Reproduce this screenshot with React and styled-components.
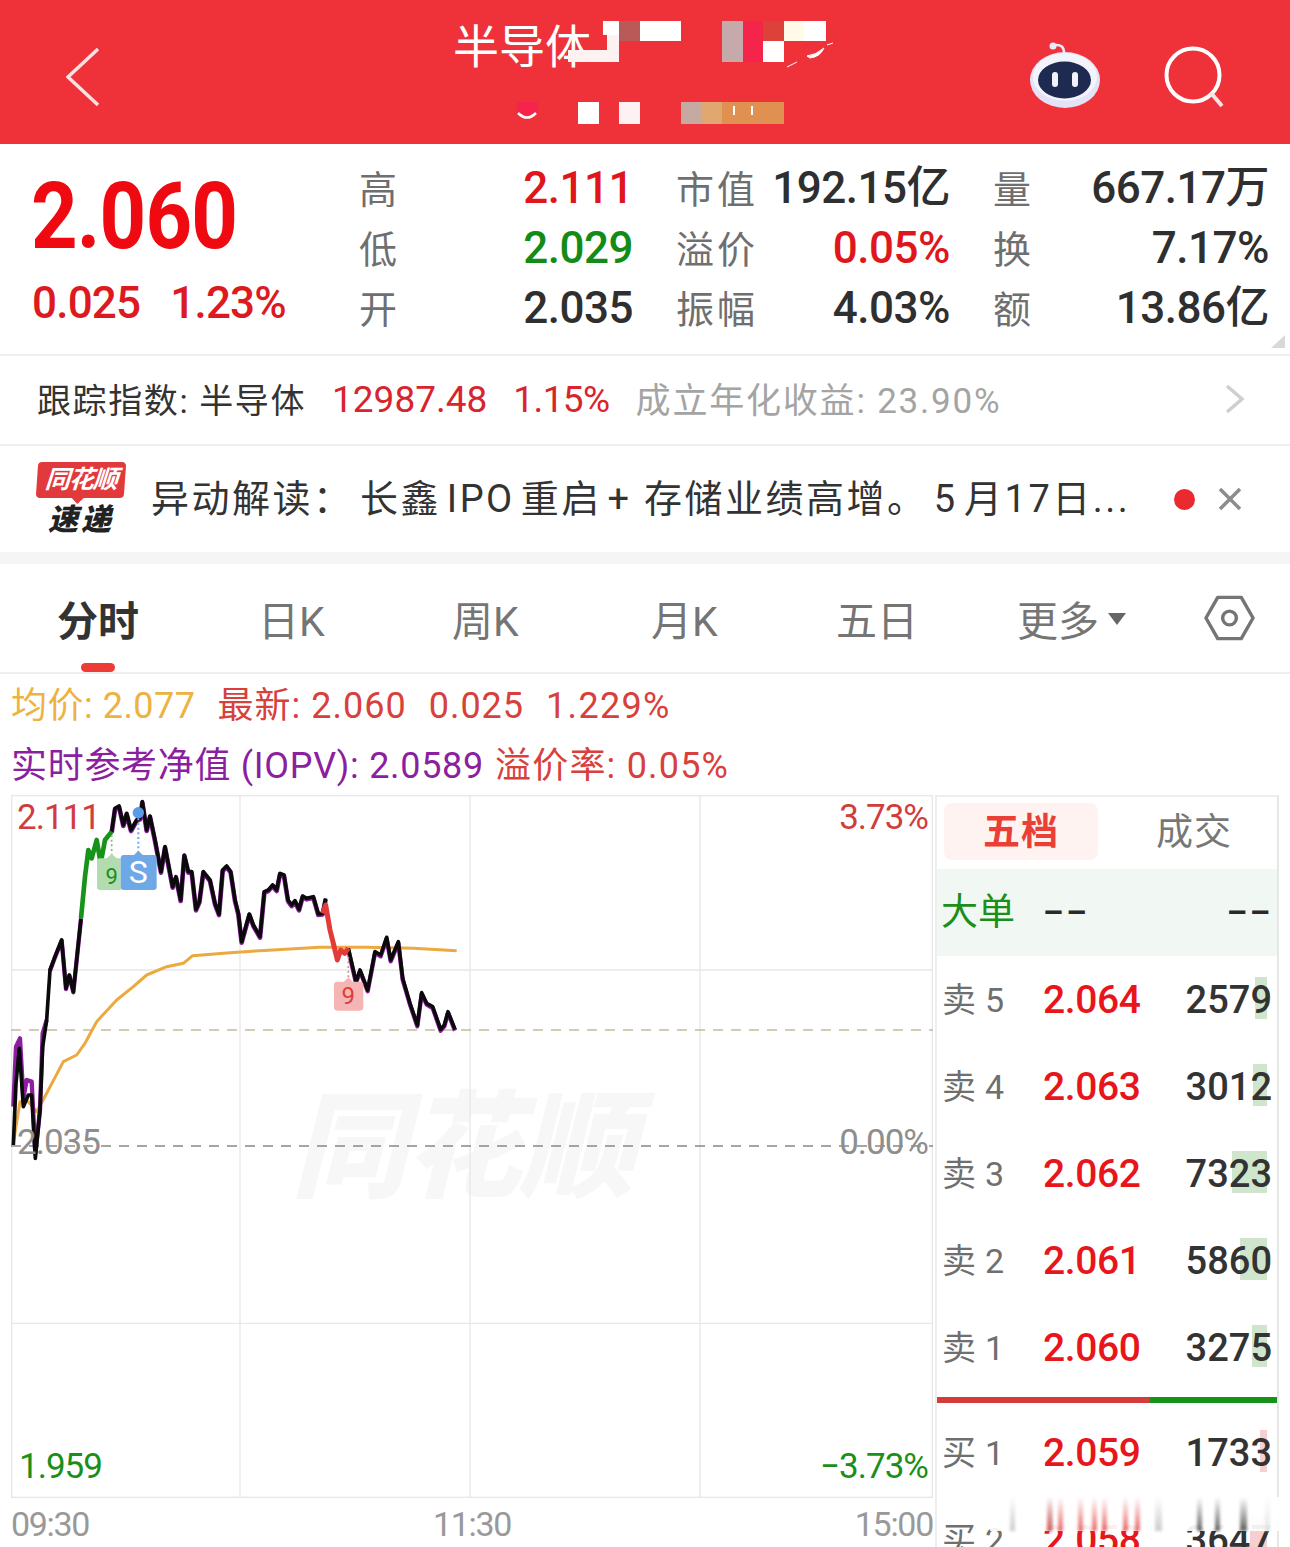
import React from "react";
import styled, { createGlobalStyle } from "styled-components";

const Global = createGlobalStyle`
  html, body { margin: 0; padding: 0; background: #fff; }
  * { box-sizing: border-box; }
`;
const FONT = `Roboto, "Noto Sans CJK SC", sans-serif`;

const Page = styled.div`
  position: relative; width: 1290px; height: 1547px; overflow: hidden;
  background: #fff; font-family: ${FONT}; color: #333;
`;
const Header = styled.header`
  position: relative; height: 144px; background: #ef323a;
  display: flex; justify-content: space-between; align-items: center; padding: 0 64px 0 66px;
`;
const HeaderIcons = styled.div`display: flex; align-items: center; gap: 62px; margin-top: 10px;`;
const BackIcon = styled.svg`width: 34px; height: 60px; margin-top: 10px;`;
const Title = styled.h1`
  position: absolute; left: 453px; top: 16px; margin: 0; color: #fff;
  font: 400 46px/62px ${FONT};
`;
const Mosaic = styled.i`
  position: absolute; display: block;
  left: ${p => p.$x}px; top: ${p => p.$y}px; width: ${p => p.$w}px; height: ${p => p.$h}px;
  background: ${p => p.$c};
`;
const Scribble = styled.svg`position: absolute; left: 510px; top: 40px; width: 340px; height: 90px;`;

const Quote = styled.section`
  position: relative; height: 212px; display: flex; border-bottom: 2px solid #eee;
`;
const PriceBlock = styled.div`width: 360px; padding: 27px 0 0 33px;`;
const BigPrice = styled.div`
  font: 700 92px/92px ${FONT}; letter-spacing: -1px; color: #ee0a10; margin-left: -2px;
  transform: scaleX(0.885); transform-origin: left center;
`;
const PriceChange = styled.div`
  display: flex; gap: 30px; margin-top: 15px; margin-left: -1px;
  font: 500 44px/50px ${FONT}; letter-spacing: -0.8px; color: #dc1a20;
`;
const Stats = styled.div`
  display: grid; grid-template-columns: 272px 272px 274px; column-gap: 45px;
  grid-auto-rows: 60px; padding-top: 16px; align-content: start;
`;
const Stat = styled.div`display: flex; justify-content: space-between; align-items: center;`;
const StatLabel = styled.span`font: 400 38px/60px ${FONT}; color: #6f6f6f; letter-spacing: ${p => p.$wide ? "3px" : "0"}; margin-left: -1px;`;
const StatValue = styled.span`
  font: 500 44px/60px ${FONT}; letter-spacing: -0.5px; margin-top: -4px; margin-right: -1px;
  color: ${p => p.$c || "#2f2f2f"};
`;
const Corner = styled.i`
  position: absolute; right: 5px; bottom: 6px; width: 0; height: 0;
  border-style: solid; border-width: 0 0 13px 14px; border-color: transparent transparent #d8d8d8 transparent;
`;
const IndexRow = styled.section`
  height: 90px; display: flex; align-items: center; padding: 0 44px 2px 37px;
  border-bottom: 2px solid #eee; font-size: 34px; white-space: nowrap;
`;
const IndexLabel = styled.span`color: #333; letter-spacing: 1.6px; width: 295px; flex: none; margin-top: -2px;`;
const IndexValue = styled.span`color: #d8242c; font-size: 37px; letter-spacing: ${p => p.$s || 0}px; margin-right: ${p => p.$m}px;`;
const IndexGray = styled.span`color: #a4a4a4; letter-spacing: 1.8px; flex: 1; font-size: 35px; margin-top: -4px;`;

const NewsRow = styled.section`
  height: 106px; display: flex; align-items: center; padding: 0 47px 0 37px;
`;
const Logo = styled.div`width: 88px; flex: none; margin-right: 26px; display: flex; flex-direction: column; align-items: center; margin-top: 2px;`;
const Badge = styled.div`
  position: relative; width: 88px; height: 36px; background: #e23a3c; border-radius: 4px; transform: skewX(-4deg);
  color: #fff; font: italic 700 25px/36px ${FONT}; text-align: center; letter-spacing: -1px;
  &::after { content: ""; position: absolute; left: 36px; bottom: -6px; border-style: solid; border-width: 6px 6px 0 6px; border-color: #e23a3c transparent transparent transparent; }
`;
const LogoSub = styled.div`font: italic 900 30px/36px ${FONT}; color: #222; letter-spacing: 3px; margin-top: 4px;`;
const NewsText = styled.div`
  flex: 1; min-width: 0; font: 400 38px/50px ${FONT}; color: #333; white-space: nowrap;
  letter-spacing: 2.5px; word-spacing: -6px; margin-right: 40px;
`;
const Dot = styled.i`width: 21px; height: 21px; border-radius: 50%; background: #ea2a2e; flex: none; margin-right: 22px;`;
const CloseIcon = styled.svg`flex: none; width: 26px; height: 26px;`;
const Band = styled.div`height: 12px; background: #f5f5f5;`;

const Tabs = styled.nav`
  position: relative; height: 110px; border-bottom: 2px solid #eee; display: flex; align-items: center; padding: 8px 35px 0 57px;
`;
const Tab = styled.span`
  font: ${p => p.$on ? 700 : 400} 41px/50px ${FONT}; color: ${p => p.$on ? "#333" : "#757575"};
  width: ${p => p.$w}px; flex: none; display: flex; align-items: center; white-space: nowrap;
`;
const TabMark = styled.i`position: absolute; left: 81px; bottom: 0; width: 34px; height: 9px; border-radius: 5px; background: #ee3b36;`;

const InfoBlock = styled.div`padding-top: 2px;`;
const InfoLine = styled.div`
  height: 60px; padding-left: 11px; display: flex; align-items: center; gap: ${p => p.$gap || 22}px;
  font: 400 36px/60px ${FONT}; white-space: nowrap;
`;
const InfoText = styled.span`color: ${p => p.$c}; letter-spacing: ${p => p.$s ?? 1}px;`;

const Lower = styled.section`display: flex; padding-left: 11px; margin-top: -1px;`;
const ChartCol = styled.div`width: 922px; flex: none;`;
const Chart = styled.div`position: relative; height: 703px; overflow: hidden;`;
const ChartSvg = styled.svg`position: absolute; inset: 0; width: 100%; height: 100%;`;
const Watermark = styled.div`
  position: absolute; left: 280px; top: 288px; font: italic 900 116px/130px ${FONT}; color: #f7f7f7; letter-spacing: -2px; white-space: nowrap;
`;
const ChartLabel = styled.span`
  position: absolute; top: ${p => p.$t}px; ${p => p.$r != null ? `right: ${p.$r}px;` : `left: ${p.$l}px;`}
  font: 400 35px/40px ${FONT}; letter-spacing: -1px; color: ${p => p.$c};
`;
const Axis = styled.div`
  display: flex; justify-content: space-between; padding-top: 5px;
  font: 400 34px/42px ${FONT}; letter-spacing: -1.3px; color: #999;
`;

const Book = styled.aside`
  width: 344px; margin-left: 2px; flex: none; height: 760px; padding-top: 6px;
  border-left: 2px solid #eee; border-right: 2px solid #e6e6e6; border-top: 2px solid #eee;
`;
const BookTabs = styled.div`display: flex; height: 66px; padding: 0 0 0 7px;`;
const BookTab = styled.div`
  flex: none; width: ${p => p.$w}px; height: 57px; border-radius: 8px; padding-left: ${p => p.$pad || 0}px;
  background: ${p => p.$on ? "#fff3f2" : "transparent"};
  color: ${p => p.$on ? "#ea3f36" : "#777"}; font: ${p => p.$on ? 700 : 400} 37px/59px ${FONT}; letter-spacing: 1px; text-align: center;
`;
const BigRow = styled.div`
  height: 87px; background: #f1f8f3; padding: 0 4px 0 4px; display: grid; grid-template-columns: 102px 1fr auto;
  align-items: center; font: 400 37px/87px ${FONT}; color: #1a8f1a;
`;
const Dash = styled.span`color: #2a2a2a; font: 700 32px/87px ${FONT}; letter-spacing: 3px;`;
const Row = styled.div`
  position: relative; height: 87px; padding: 1px 5px 0 5px; display: grid; grid-template-columns: 101px 1fr auto; align-items: center;
`;
const RowLabel = styled.span`font: 400 34px/87px ${FONT}; color: #6f6f6f; letter-spacing: 0.3px; white-space: nowrap;`;
const RowPrice = styled.span`font: 500 39px/87px ${FONT}; color: #e8161a; letter-spacing: -0.4px; position: relative;`;
const RowQty = styled.span`font: 500 38px/87px ${FONT}; color: #333; position: relative; letter-spacing: 0;`;
const QtyBar = styled.i`
  position: absolute; right: 10px; top: 21px; height: 42px; width: ${p => p.$w}px;
  background: ${p => p.$buy ? "#f6cfd0" : "#cfe6cc"};
`;
const Split = styled.div`display: flex; height: 6px; margin: 6px 0 6px;`;
const SplitPart = styled.i`display: block; height: 100%; background: ${p => p.$c}; width: ${p => p.$w}px;`;
const Smear = styled.div`
  position: absolute; left: 990px; top: 1497px; width: 290px; height: 34px;
  background: linear-gradient(to bottom, rgba(255,255,255,.96), rgba(255,255,255,.92));
`;
const Streak = styled.i`
  position: absolute; top: 0; bottom: 0; left: ${p => p.$x}px; width: ${p => p.$w || 5}px;
  background: linear-gradient(to bottom, transparent, ${p => p.$c}); opacity: .75; filter: blur(1.5px);
`;

const black1 = "40,1065 48,880 58,775 70,950 85,915 95,915 106,1105 120,960 128,770 140,690 150,540 165,500 185,450 198,595 208,555 220,605 243,385";
const black2 = "335,125 345,55 357,48 370,105 380,70 393,120 410,90 420,85 427,35 440,120 450,78 465,150 483,245 495,170 518,290 528,260 542,330 553,195 565,245 575,245 588,358 598,335 610,245 630,270 645,340 657,372 668,240 680,228 692,245 705,330 715,370 725,455 748,372 760,405 780,440 793,305 805,300 818,285 830,300 840,250 852,255 864,330 875,345 885,332 897,358 908,318 920,325 940,320 955,372 968,370 977,325";
const black3 = "1045,475 1068,575 1080,540 1103,600 1125,485 1142,495 1160,442 1172,510 1195,455 1208,565 1230,640 1252,705 1265,608 1280,640 1298,650 1322,718 1333,705 1344,665 1365,718";
const green = "243,385 255,260 265,180 275,205 290,150 302,220 315,150 335,125";
const red = "968,370 977,345 990,420 1000,460 1012,510 1022,480 1034,490 1045,475";
const purple1 = "40,950 48,770 60,745 70,925 80,870 95,875 106,1090 120,960 128,730 140,690";
const purple = (s, dy) => s.split(" ").map(p => { const [a, b] = p.split(","); return `${a},${+b + dy}`; }).join(" ");
const avg = "40,1060 60,935 85,935 110,965 140,910 190,815 230,795 255,760 290,695 350,630 400,590 440,555 500,530 550,520 578,497 690,488 780,482 960,472 1100,472 1240,475 1370,482";

const mosaics = [
  [568, 50, 51, 12, "#fdf2f2"], [603, 21, 16, 14, "#fff"], [607, 35, 12, 16, "#fdf2f2"],
  [619, 21, 21, 20, "#b85a5a"], [640, 21, 41, 20, "#fff"],
  [722, 21, 21, 41, "#c6a9ab"], [743, 21, 20, 41, "#f5244a"], [763, 21, 21, 20, "#dd423a"],
  [763, 41, 21, 21, "#fff"], [784, 21, 20, 20, "#fffbe8"], [804, 21, 22, 20, "#fff"],
  [517, 102, 21, 13, "#f5244a"],
  [578, 102, 21, 22, "#fff"], [619, 102, 21, 22, "#fdf1f3"],
  [681, 102, 21, 22, "#c6a9a0"], [702, 102, 20, 22, "#e0a870"], [722, 102, 62, 22, "#e09050"],
  [733, 106, 2, 9, "#fff"], [751, 106, 2, 9, "#fff"],
];

const book = {
  sell: [["卖 5", "2.064", "2579", 12], ["卖 4", "2.063", "3012", 14], ["卖 3", "2.062", "7323", 35], ["卖 2", "2.061", "5860", 27], ["卖 1", "2.060", "3275", 15]],
  buy: [["买 1", "2.059", "1733", 7], ["买 2", "2.058", "3647", 17]],
};
const streaks = [[58, "#aaa"], [57, "#e23a3c"], [68, "#e23a3c"], [88, "#e23a3c"], [102, "#e23a3c"], [112, "#e23a3c"], [133, "#e23a3c"], [145, "#e23a3c"], [165, "#bbb", 7], [207, "#333"], [225, "#333"], [250, "#333", 7], [20, "#bbb"], [275, "#ddd"]];

const H = "\u200A";

export default function App() {
  return (
    <Page>
      <Global />
      <Header>
        <BackIcon viewBox="0 0 34 60"><path d="M32 2 L2 30 L32 58" fill="none" stroke="#fbe2e2" strokeWidth="3.5" /></BackIcon>
        <Title>半导体</Title>
        {mosaics.map((m, i) => <Mosaic key={i} $x={m[0]} $y={m[1]} $w={m[2]} $h={m[3]} $c={m[4]} />)}
        <Scribble viewBox="0 0 340 90">
          <path d="M8 73 Q17 82 26 73" fill="none" stroke="#fff" strokeWidth="2.5" />
          <path d="M297 16 Q306 15 314 8 Q310 17 300 18 Z M277 27 L287 22 M317 5 L323 3" fill="#fff" stroke="#fff" strokeWidth="1" />
        </Scribble>
        <HeaderIcons>
          <svg width="74" height="70" viewBox="0 0 74 70">
            <circle cx="25" cy="4" r="3.5" fill="#ecebf8" />
            <path d="M27 3 Q36 2 36 11" fill="none" stroke="#ecebf8" strokeWidth="2.5" />
            <ellipse cx="37" cy="38" rx="35" ry="28" fill="#e4e2f6" />
            <ellipse cx="37" cy="35" rx="32" ry="24" fill="#f3f3fb" />
            <ellipse cx="36.5" cy="38" rx="26.5" ry="18.5" fill="#1f2a50" />
            <rect x="24" y="30" width="6" height="15" rx="3" fill="#f2f3fa" />
            <rect x="44" y="30" width="6" height="15" rx="3" fill="#f2f3fa" />
          </svg>
          <svg width="62" height="62" viewBox="0 0 62 62">
            <circle cx="29" cy="29" r="26.5" fill="none" stroke="#fff" strokeWidth="4" />
            <path d="M47 47 L58 60" stroke="#fbe2e2" strokeWidth="4" />
          </svg>
        </HeaderIcons>
      </Header>

      <Quote>
        <PriceBlock>
          <BigPrice>2.060</BigPrice>
          <PriceChange><span>0.025</span><span>1.23%</span></PriceChange>
        </PriceBlock>
        <Stats>
          <Stat><StatLabel>高</StatLabel><StatValue $c="#e0161c">2.111</StatValue></Stat>
          <Stat><StatLabel $wide>市值</StatLabel><StatValue>192.15亿</StatValue></Stat>
          <Stat><StatLabel>量</StatLabel><StatValue>667.17万</StatValue></Stat>
          <Stat><StatLabel>低</StatLabel><StatValue $c="#128c14">2.029</StatValue></Stat>
          <Stat><StatLabel $wide>溢价</StatLabel><StatValue $c="#df161c">0.05%</StatValue></Stat>
          <Stat><StatLabel>换</StatLabel><StatValue>7.17%</StatValue></Stat>
          <Stat><StatLabel>开</StatLabel><StatValue>2.035</StatValue></Stat>
          <Stat><StatLabel $wide>振幅</StatLabel><StatValue>4.03%</StatValue></Stat>
          <Stat><StatLabel>额</StatLabel><StatValue>13.86亿</StatValue></Stat>
        </Stats>
        <Corner />
      </Quote>

      <IndexRow>
        <IndexLabel>跟踪指数: 半导体</IndexLabel>
        <IndexValue $m={26}>12987.48</IndexValue>
        <IndexValue $m={26} $s={-0.6}>1.15%</IndexValue>
        <IndexGray>成立年化收益: 23.90%</IndexGray>
        <svg width="22" height="30" viewBox="0 0 22 30"><path d="M3 2 L18 15 L3 28" fill="none" stroke="#cfcfcf" strokeWidth="3.5" /></svg>
      </IndexRow>

      <NewsRow>
        <Logo>
          <Badge>同花顺</Badge>
          <LogoSub>速递</LogoSub>
        </Logo>
        <NewsText>{`异动解读：${H}长鑫 IPO 重启 + ${H}存储业绩高增。${H}5${H}月17日...`}</NewsText>
        <Dot />
        <CloseIcon viewBox="0 0 26 26"><path d="M3 3 L23 23 M23 3 L3 23" stroke="#8c8c8c" strokeWidth="3.5" /></CloseIcon>
      </NewsRow>
      <Band />

      <Tabs>
        <Tab $on $w={201}>分时</Tab>
        <Tab $w={194}>日K</Tab>
        <Tab $w={199}>周K</Tab>
        <Tab $w={185}>月K</Tab>
        <Tab $w={181}>五日</Tab>
        <Tab $w={186}>
          更多
          <svg width="18" height="14" viewBox="0 0 18 14" style={{ marginLeft: 9, marginTop: -6 }}><path d="M0 1 H18 L9 13 Z" fill="#666" /></svg>
        </Tab>
        <svg width="52" height="46" viewBox="0 0 52 46" style={{ marginLeft: 1, marginTop: -8 }}>
          <path d="M2 23 L14 2 H38 L50 23 L38 44 H14 Z" fill="none" stroke="#757575" strokeWidth="3.5" strokeLinejoin="round" />
          <circle cx="26" cy="23" r="7" fill="none" stroke="#757575" strokeWidth="3.5" />
        </svg>
        <TabMark />
      </Tabs>

      <InfoBlock>
        <InfoLine>
          <InfoText $c="#edb23f" $s={0.5}>均价: 2.077</InfoText>
          <InfoText $c="#d8403c">最新: 2.060</InfoText>
          <InfoText $c="#d8403c">0.025</InfoText>
          <InfoText $c="#d8403c" $s={1.3}>1.229%</InfoText>
        </InfoLine>
        <InfoLine $gap={11}>
          <InfoText $c="#8b1fa0" $s={0.7}>实时参考净值 (IOPV): 2.0589</InfoText>
          <InfoText $c="#d8403c" $s={1.2}>溢价率: 0.05%</InfoText>
        </InfoLine>
      </InfoBlock>

      <Lower>
        <ChartCol>
          <Chart>
            <Watermark>同花顺</Watermark>
            <ChartSvg viewBox="33 15 2766 2109" preserveAspectRatio="none">
              <g stroke="#e8e8e8" strokeWidth="4" fill="none">
                <rect x="35" y="17" width="2762" height="2105" />
                <path d="M720 15 V2124 M1410 15 V2124 M2100 15 V2124 M33 540 H2799 M33 1600 H2799" />
              </g>
              <path d="M33 720 H2799" stroke="#c8b8a0" strokeWidth="4" strokeDasharray="30 24" />
              <path d="M33 1068 H2799" stroke="#888" strokeWidth="4" strokeDasharray="30 24" />
              <g fill="none" strokeLinejoin="round">
                <polyline points={avg} stroke="#eba93f" strokeWidth="9" />
                <polyline points={purple1} stroke="#8b1fa0" strokeWidth="13" />
                <polyline points={purple(black1.split(" ").slice(10).join(" "), 2)} stroke="#8b1fa0" strokeWidth="13" />
                <polyline points={purple(black2, 3)} stroke="#8b1fa0" strokeWidth="14" />
                <polyline points={purple(black3, 4)} stroke="#8b1fa0" strokeWidth="13" />
                <polyline points={black1} stroke="#0a0a0a" strokeWidth="11" />
                <polyline points={black2} stroke="#0a0a0a" strokeWidth="11" />
                <polyline points={black3} stroke="#0a0a0a" strokeWidth="11" />
                <polyline points={green} stroke="#17931a" strokeWidth="14" />
                <polyline points={red} stroke="#e33b38" strokeWidth="15" />
              </g>
              <path d="M335 135 V195" stroke="#7fba7f" strokeWidth="5" strokeDasharray="6 8" />
              <path d="M415 85 V185" stroke="#6fa8e6" strokeWidth="6" strokeDasharray="6 8" />
              <path d="M1045 500 V565" stroke="#d58f8f" strokeWidth="5" strokeDasharray="6 8" />
              <path d="M291 215 Q291 205 300 205 H320 L335 192 L350 205 H362 V300 H300 Q291 300 291 292 Z" fill="#b2dbb0" />
              <path d="M362 205 Q362 195 372 195 H402 L415 182 L428 195 H460 Q470 195 470 205 V292 Q470 300 460 300 H372 Q362 300 362 292 Z" fill="#6fa8e6" />
              <circle cx="415" cy="68" r="17" fill="#5a9be8" />
              <path d="M1002 585 Q1002 575 1012 575 H1032 L1045 562 L1058 575 H1080 Q1090 575 1090 585 V652 Q1090 662 1080 662 H1012 Q1002 662 1002 652 Z" fill="#f5b5b5" />
              <text x="335" y="282" textAnchor="middle" fontFamily="Roboto" fontSize="66" fill="#1a8f1a">9</text>
              <text x="415" y="280" textAnchor="middle" fontFamily="Roboto" fontSize="96" fill="#fff">S</text>
              <text x="1045" y="642" textAnchor="middle" fontFamily="Roboto" fontSize="72" fill="#d8403c">9</text>
            </ChartSvg>
            <ChartLabel $l={6} $t={3} $c="#d13c3c">2.111</ChartLabel>
            <ChartLabel $r={5} $t={3} $c="#d13c3c">3.73%</ChartLabel>
            <ChartLabel $l={6} $t={328} $c="#8e8e8e">2.035</ChartLabel>
            <ChartLabel $r={5} $t={328} $c="#8e8e8e">0.00%</ChartLabel>
            <ChartLabel $l={8} $t={652} $c="#1a8f1a">1.959</ChartLabel>
            <ChartLabel $r={5} $t={652} $c="#1a8f1a">−3.73%</ChartLabel>
          </Chart>
          <Axis><span>09:30</span><span>11:30</span><span>15:00</span></Axis>
        </ChartCol>
        <Book>
          <BookTabs><BookTab $on $w={154}>五档</BookTab><BookTab $w={180} $pad={12}>成交</BookTab></BookTabs>
          <BigRow><span>大单</span><Dash>––</Dash><Dash>––</Dash></BigRow>
          {book.sell.map(r => (
            <Row key={r[0]}><QtyBar $w={r[3]} /><RowLabel>{r[0]}</RowLabel><RowPrice>{r[1]}</RowPrice><RowQty>{r[2]}</RowQty></Row>
          ))}
          <Split><SplitPart $c="#d43c3c" $w={213} /><SplitPart $c="#17931a" $w={127} /></Split>
          {book.buy.map(r => (
            <Row key={r[0]}><QtyBar $buy $w={r[3]} /><RowLabel>{r[0]}</RowLabel><RowPrice>{r[1]}</RowPrice><RowQty>{r[2]}</RowQty></Row>
          ))}
        </Book>
      </Lower>
      <Smear>{streaks.map((s, i) => <Streak key={i} $x={s[0]} $c={s[1]} $w={s[2]} />)}</Smear>
    </Page>
  );
}
